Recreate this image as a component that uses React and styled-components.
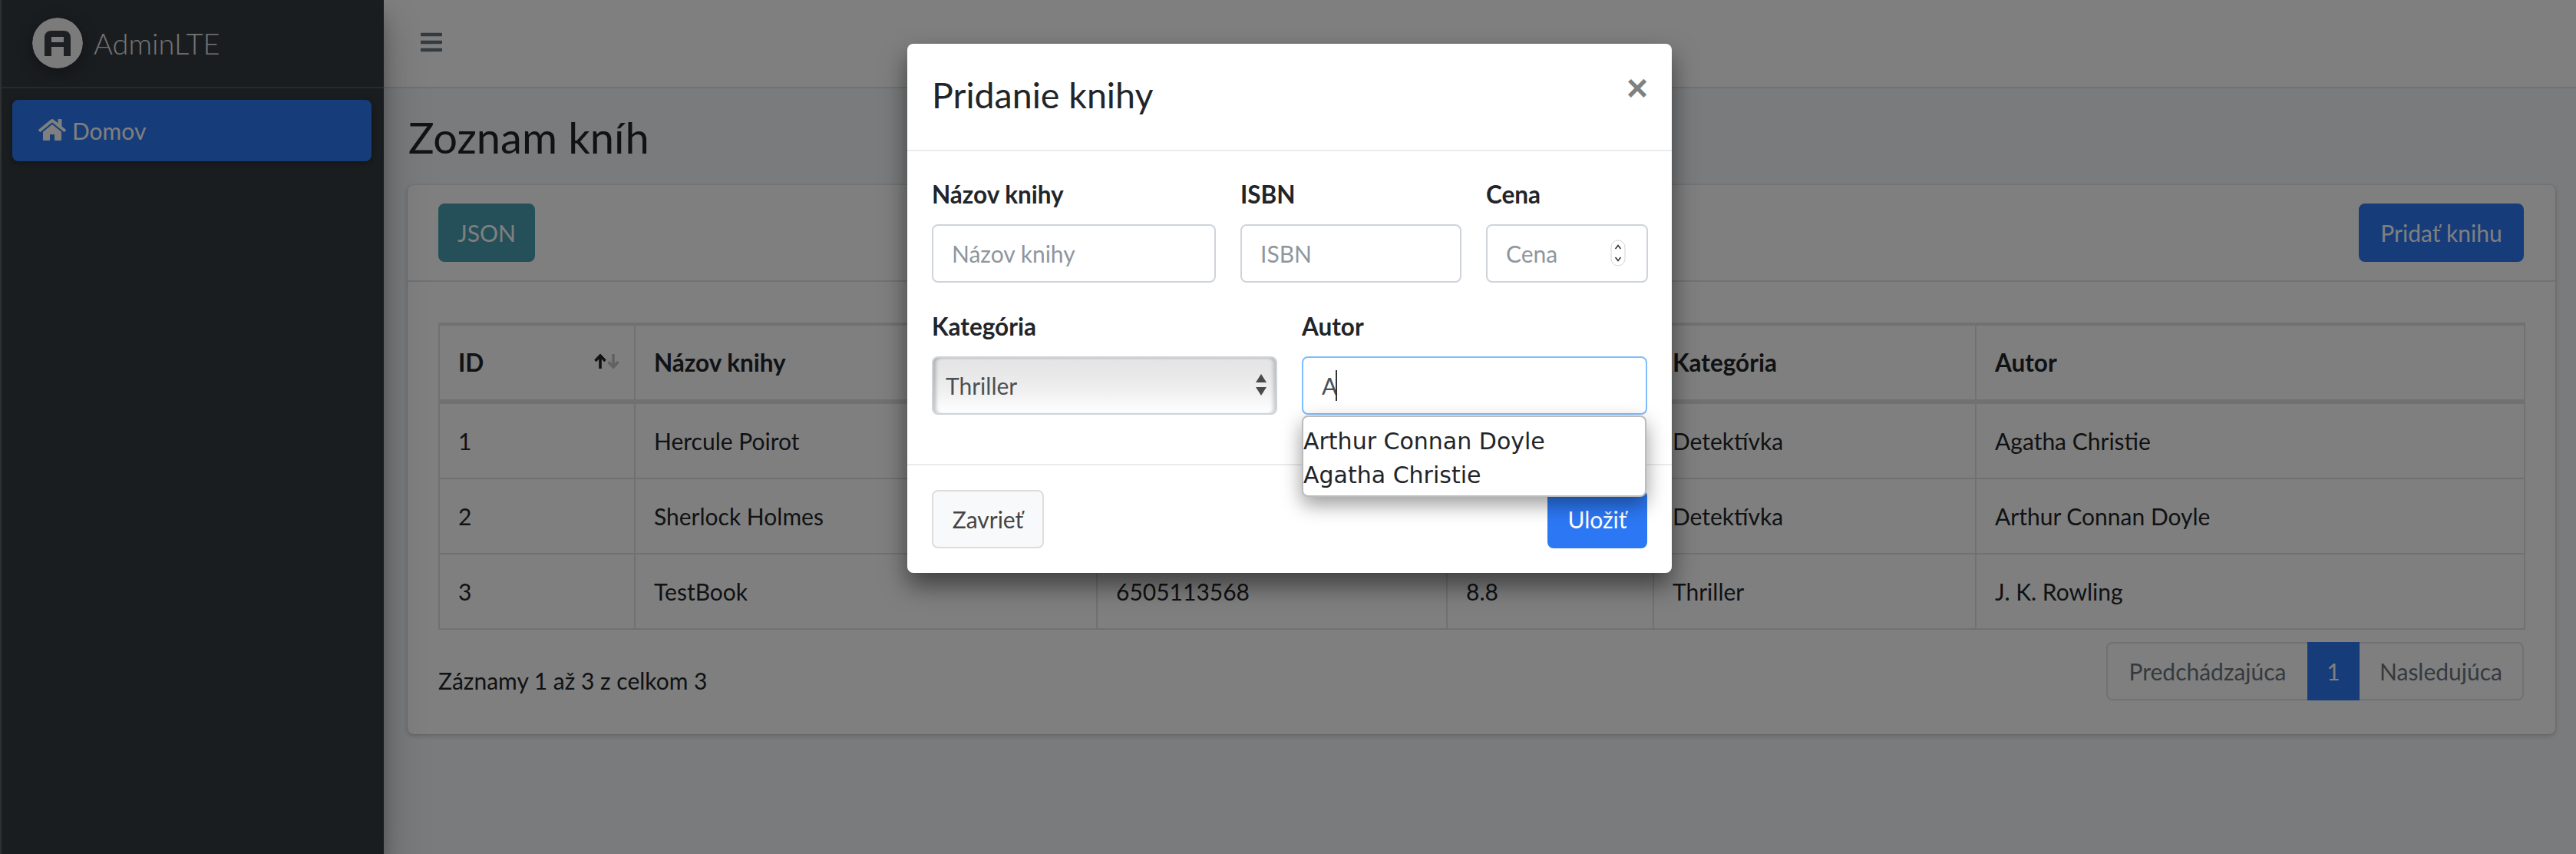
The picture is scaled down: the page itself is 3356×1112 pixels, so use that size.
import React from "react";
import styled, { createGlobalStyle } from "styled-components";
import { FaBars, FaHome } from "react-icons/fa";

const FONT = `"Lato", "Noto Sans", sans-serif`;
const PRIMARY = "#2c78f4";

const Global = createGlobalStyle`
  html, body { margin: 0; padding: 0; height: 100%; background: #f4f6f9; overflow: hidden; }
  * { box-sizing: border-box; }
  body { font-family: ${FONT}; font-size: 30px; line-height: 48px; color: #212529; }
`;

const Page = styled.div`
  position: relative;
  display: flex;
  width: 3356px;
  height: 1112px;
  overflow: hidden;
`;
const Sidebar = styled.aside`
  flex: 0 0 500px;
  background: #343a40;
  border-left: 2px solid #5c6064;
  box-shadow: 0 28px 56px rgba(0,0,0,.25), 0 20px 20px rgba(0,0,0,.22);
  z-index: 2;
`;
const Brand = styled.div`
  display: flex;
  align-items: center;
  height: 115px;
  padding: 0 0 2px 40px;
  gap: 14px;
  border-bottom: 2px solid #4b545c;
  font-size: 38px;
  font-weight: 300;
  color: #e6e6e6;
`;
const LogoSvg = styled.svg`
  width: 66px;
  height: 66px;
  flex: none;
  border-radius: 50%;
  box-shadow: 0 6px 20px rgba(0,0,0,.35);
`;
const Nav = styled.nav`
  padding: 15px 16px 15px 14px;
`;
const NavItem = styled.a`
  display: flex;
  align-items: center;
  gap: 8px;
  height: 80px;
  padding: 0 34px;
  border-radius: 8px;
  background: ${PRIMARY};
  color: #fff;
  font-size: 30px;
  box-shadow: 0 2px 6px rgba(0,0,0,.3);
  svg { width: 36px; height: 32px; margin-top: -2px; }
`;
const Main = styled.main`
  flex: 1;
  min-width: 0;
`;
const Topbar = styled.header`
  display: flex;
  align-items: center;
  height: 115px;
  padding: 0 0 4px 48px;
  background: #fff;
  border-bottom: 2px solid #dee2e6;
  color: #6c757d;
  svg { width: 28px; height: 32px; }
`;
const Content = styled.div`
  padding: 0 27px 0 31px;
`;
const Title = styled.h1`
  margin: 0;
  padding: 29px 1px 28px;
  font-size: 56px;
  font-weight: 400;
  line-height: 69px;
  color: #212529;
`;
const Card = styled.section`
  background: #fff;
  border-radius: 8px;
  box-shadow: 0 0 2px rgba(0,0,0,.125), 0 2px 6px rgba(0,0,0,.2);
`;
const CardHeader = styled.div`
  display: flex;
  justify-content: space-between;
  align-items: center;
  height: 126px;
  padding: 0 41px 0 40px;
  border-bottom: 2px solid #dee2e6;
`;
const Button = styled.button`
  height: 76px;
  padding: 0;
  border: 2px solid ${p => p.$border || p.$bg};
  border-radius: 8px;
  background: ${p => p.$bg};
  color: ${p => p.$color || "#fff"};
  font-family: ${FONT};
  font-size: 30px;
  width: ${p => p.$w}px;
`;
const CardBody = styled.div`
  padding: 53px 41px 44px 40px;
`;
const Table = styled.table`
  width: 2717px;
  table-layout: fixed;
  border-collapse: separate;
  border-spacing: 0;
  border-left: 2px solid #dee2e6;
`;
const Th = styled.th`
  height: 106px;
  padding: 0 24px;
  text-align: left;
  font-size: 31.5px;
  font-weight: 700;
  border-top: 4px solid #dee2e6;
  border-bottom: 6px solid #dee2e6;
  border-right: 2px solid #dee2e6;
`;
const ThInner = styled.div`
  display: flex;
  justify-content: space-between;
  align-items: center;
`;
const SortIcon = styled.svg`
  width: 33px;
  height: 19px;
  margin: -4px -5px 0 0;
`;
const Td = styled.td`
  height: 98px;
  padding: 0 24px;
  border-bottom: 2px solid #dee2e6;
  border-right: 2px solid #dee2e6;
`;
const TableFooter = styled.div`
  display: flex;
  justify-content: space-between;
  align-items: flex-start;
  margin-top: 16px;
`;
const Info = styled.div`
  padding-top: 26px;
`;
const Pagination = styled.div`
  display: flex;
  height: 76px;
`;
const PageItem = styled.a`
  display: flex;
  align-items: center;
  justify-content: center;
  width: ${p => p.$w}px;
  background: ${p => (p.$active ? PRIMARY : "#fff")};
  color: ${p => (p.$active ? "#fff" : "#6c757d")};
  border: ${p => (p.$active ? "0" : "2px solid #dee2e6")};
  border-right-width: ${p => (p.$first ? 0 : undefined)};
  border-left-width: ${p => (p.$last ? 0 : undefined)};
  border-radius: ${p => (p.$first ? "8px 0 0 8px" : p.$last ? "0 8px 8px 0" : "0")};
`;
const Backdrop = styled.div`
  position: absolute;
  inset: 0;
  background: rgba(0,0,0,.5);
  z-index: 5;
`;
const Modal = styled.div`
  position: absolute;
  left: 1182px;
  top: 57px;
  width: 996px;
  background: #fff;
  border-radius: 8px;
  box-shadow: 0 16px 32px rgba(0,0,0,.5);
  z-index: 6;
`;
const ModalHeader = styled.div`
  display: flex;
  justify-content: space-between;
  height: 140px;
  padding: 32px 31px 0 32px;
  border-bottom: 2px solid #e9ecef;
`;
const ModalTitle = styled.h4`
  margin: 0;
  font-size: 46.5px;
  font-weight: 400;
  line-height: 69px;
`;
const Close = styled.span`
  margin-top: 2px;
  font-family: "Liberation Sans", sans-serif;
  font-size: 48px;
  font-weight: 700;
  line-height: 48px;
  color: #808080;
`;
const ModalBody = styled.div`
  display: flex;
  flex-direction: column;
  gap: 33px;
  padding: 32px 32px 64px;
`;
const FormRow = styled.div`
  display: grid;
  grid-template-columns: ${p => p.$cols};
  gap: 32px;
`;
const Field = styled.div`
  display: flex;
  flex-direction: column;
  gap: 15px;
  min-width: 0;
`;
const Label = styled.label`
  font-size: 31.5px;
  font-weight: 700;
  height: 48px;
`;
const InputWrap = styled.div`
  position: relative;
  height: 76px;
`;
const Input = styled.input`
  display: block;
  width: 100%;
  height: 100%;
  padding: 0 24px;
  border: 2px solid ${p => (p.$focus ? "#80bdff" : "#ced4da")};
  border-radius: 8px;
  background: #fff;
  color: #495057;
  font-family: ${FONT};
  font-size: 30px;
  outline: none;
  &::placeholder { color: #8f969d; opacity: 1; }
`;
const Select = styled.select`
  display: block;
  width: 100%;
  height: 100%;
  padding: 0 16px;
  appearance: none;
  border: 2px solid #ced4da;
  border-radius: 8px;
  background: linear-gradient(#e4e4e4, #e8e8e8 30%, #f0f0f0 60%, #fff);
  box-shadow: inset 6px 0 5px -3px rgba(0,0,0,.25), inset -6px 0 5px -3px rgba(0,0,0,.2), inset 0 3px 3px -2px rgba(0,0,0,.12);
  color: #495057;
  font-family: ${FONT};
  font-size: 30px;
`;
const SelectArrows = styled.svg`
  position: absolute;
  left: 422px;
  top: 23px;
  width: 14px;
  height: 28px;
`;
const Spinner = styled.svg`
  position: absolute;
  right: 29px;
  top: 20px;
  width: 20px;
  height: 35px;
`;
const Caret = styled.span`
  position: absolute;
  left: 44px;
  top: 18px;
  width: 2px;
  height: 40px;
  background: #333;
`;
const Suggestions = styled.div`
  position: absolute;
  left: 0;
  right: 1px;
  top: 77px;
  height: 106px;
  padding: 10px 0 0;
  background: #fff;
  border: 2px solid #bcbcbc;
  border-radius: 8px;
  box-shadow: 0 10px 26px rgba(0,0,0,.4);
  z-index: 2;
  font-family: "DejaVu Sans", sans-serif;
  font-size: 30px;
  line-height: 44px;
  color: #212529;
`;
const ModalFooter = styled.div`
  display: flex;
  justify-content: space-between;
  height: 142px;
  padding: 32px 32px 0;
  border-top: 2px solid #e9ecef;
`;

const rows = [
  ["1", "Hercule Poirot", "9780062073952", "7.5", "Detektívka", "Agatha Christie"],
  ["2", "Sherlock Holmes", "9781435172487", "9.2", "Detektívka", "Arthur Connan Doyle"],
  ["3", "TestBook", "6505113568", "8.8", "Thriller", "J. K. Rowling"],
];

export default function App() {
  return (
    <Page>
      <Global />
      <Sidebar>
        <Brand>
          <LogoSvg viewBox="0 0 66 66">
            <circle cx="33" cy="33" r="33" fill="#fff" opacity=".96" />
            <path
              fillRule="evenodd"
              fill="#3a3f44"
              d="M16 50V26c0-6 4-9 9-9h16c5 0 9 3 9 9v24H41V38H25v12ZM25 25v7h16v-7Z"
            />
          </LogoSvg>
          <span>AdminLTE</span>
        </Brand>
        <Nav>
          <NavItem>
            <FaHome />
            <span>Domov</span>
          </NavItem>
        </Nav>
      </Sidebar>
      <Main>
        <Topbar>
          <FaBars />
        </Topbar>
        <Content>
          <Title>Zoznam kníh</Title>
          <Card>
            <CardHeader>
              <Button $bg="#4aa0b2" $w={126}>JSON</Button>
              <Button $bg={PRIMARY} $w={215}>Pridať knihu</Button>
            </CardHeader>
            <CardBody>
              <Table>
                <colgroup>
                  <col style={{ width: 255 }} />
                  <col style={{ width: 602 }} />
                  <col style={{ width: 456 }} />
                  <col style={{ width: 269 }} />
                  <col style={{ width: 420 }} />
                  <col style={{ width: 715 }} />
                </colgroup>
                <thead>
                  <tr>
                    <Th>
                      <ThInner>
                        <span>ID</span>
                        <SortIcon viewBox="0 0 33 19">
                          <path d="M8 19V3M1.5 9 8 2l6.5 7" fill="none" stroke="#212529" strokeWidth="3.6" />
                          <path d="M25 0v16M18.5 10l6.5 7 6.5-7" fill="none" stroke="#c4c4c4" strokeWidth="3.6" />
                        </SortIcon>
                      </ThInner>
                    </Th>
                    <Th>Názov knihy</Th>
                    <Th>ISBN</Th>
                    <Th>Cena</Th>
                    <Th>Kategória</Th>
                    <Th>Autor</Th>
                  </tr>
                </thead>
                <tbody>
                  {rows.map(r => (
                    <tr key={r[0]}>
                      {r.map((c, i) => (
                        <Td key={i}>{c}</Td>
                      ))}
                    </tr>
                  ))}
                </tbody>
              </Table>
              <TableFooter>
                <Info>Záznamy 1 až 3 z celkom 3</Info>
                <Pagination>
                  <PageItem $first $w={262}>Predchádzajúca</PageItem>
                  <PageItem $active $w={68}>1</PageItem>
                  <PageItem $last $w={214}>Nasledujúca</PageItem>
                </Pagination>
              </TableFooter>
            </CardBody>
          </Card>
        </Content>
      </Main>
      <Backdrop />
      <Modal>
        <ModalHeader>
          <ModalTitle>Pridanie knihy</ModalTitle>
          <Close>×</Close>
        </ModalHeader>
        <ModalBody>
          <FormRow $cols="370px 288px 211px">
            <Field>
              <Label>Názov knihy</Label>
              <InputWrap><Input placeholder="Názov knihy" readOnly /></InputWrap>
            </Field>
            <Field>
              <Label>ISBN</Label>
              <InputWrap><Input placeholder="ISBN" readOnly /></InputWrap>
            </Field>
            <Field>
              <Label>Cena</Label>
              <InputWrap>
                <Input placeholder="Cena" readOnly />
                <Spinner viewBox="0 0 20 35">
                  <rect x="1" y="1" width="18" height="33" rx="9" fill="#fff" stroke="#d4d4d4" />
                  <path d="M6.5 12 10 7.5 13.5 12M6.5 23 10 27.5 13.5 23" fill="none" stroke="#333" strokeWidth="1.6" />
                </Spinner>
              </InputWrap>
            </Field>
          </FormRow>
          <FormRow $cols="450px 450px">
            <Field>
              <Label>Kategória</Label>
              <InputWrap>
                <Select defaultValue="Thriller">
                  <option>Thriller</option>
                </Select>
                <SelectArrows viewBox="0 0 14 28">
                  <path d="M7 0 14 11H0ZM7 28 0 17H14Z" fill="#4a4a4a" />
                </SelectArrows>
              </InputWrap>
            </Field>
            <Field>
              <Label>Autor</Label>
              <InputWrap>
                <Input $focus defaultValue="A" readOnly />
                <Caret />
                <Suggestions>
                  <div>Arthur Connan Doyle</div>
                  <div>Agatha Christie</div>
                </Suggestions>
              </InputWrap>
            </Field>
          </FormRow>
        </ModalBody>
        <ModalFooter>
          <Button $bg="#f8f9fa" $border="#ddd" $color="#444" $w={146}>Zavrieť</Button>
          <Button $bg={PRIMARY} $w={130}>Uložiť</Button>
        </ModalFooter>
      </Modal>
    </Page>
  );
}
